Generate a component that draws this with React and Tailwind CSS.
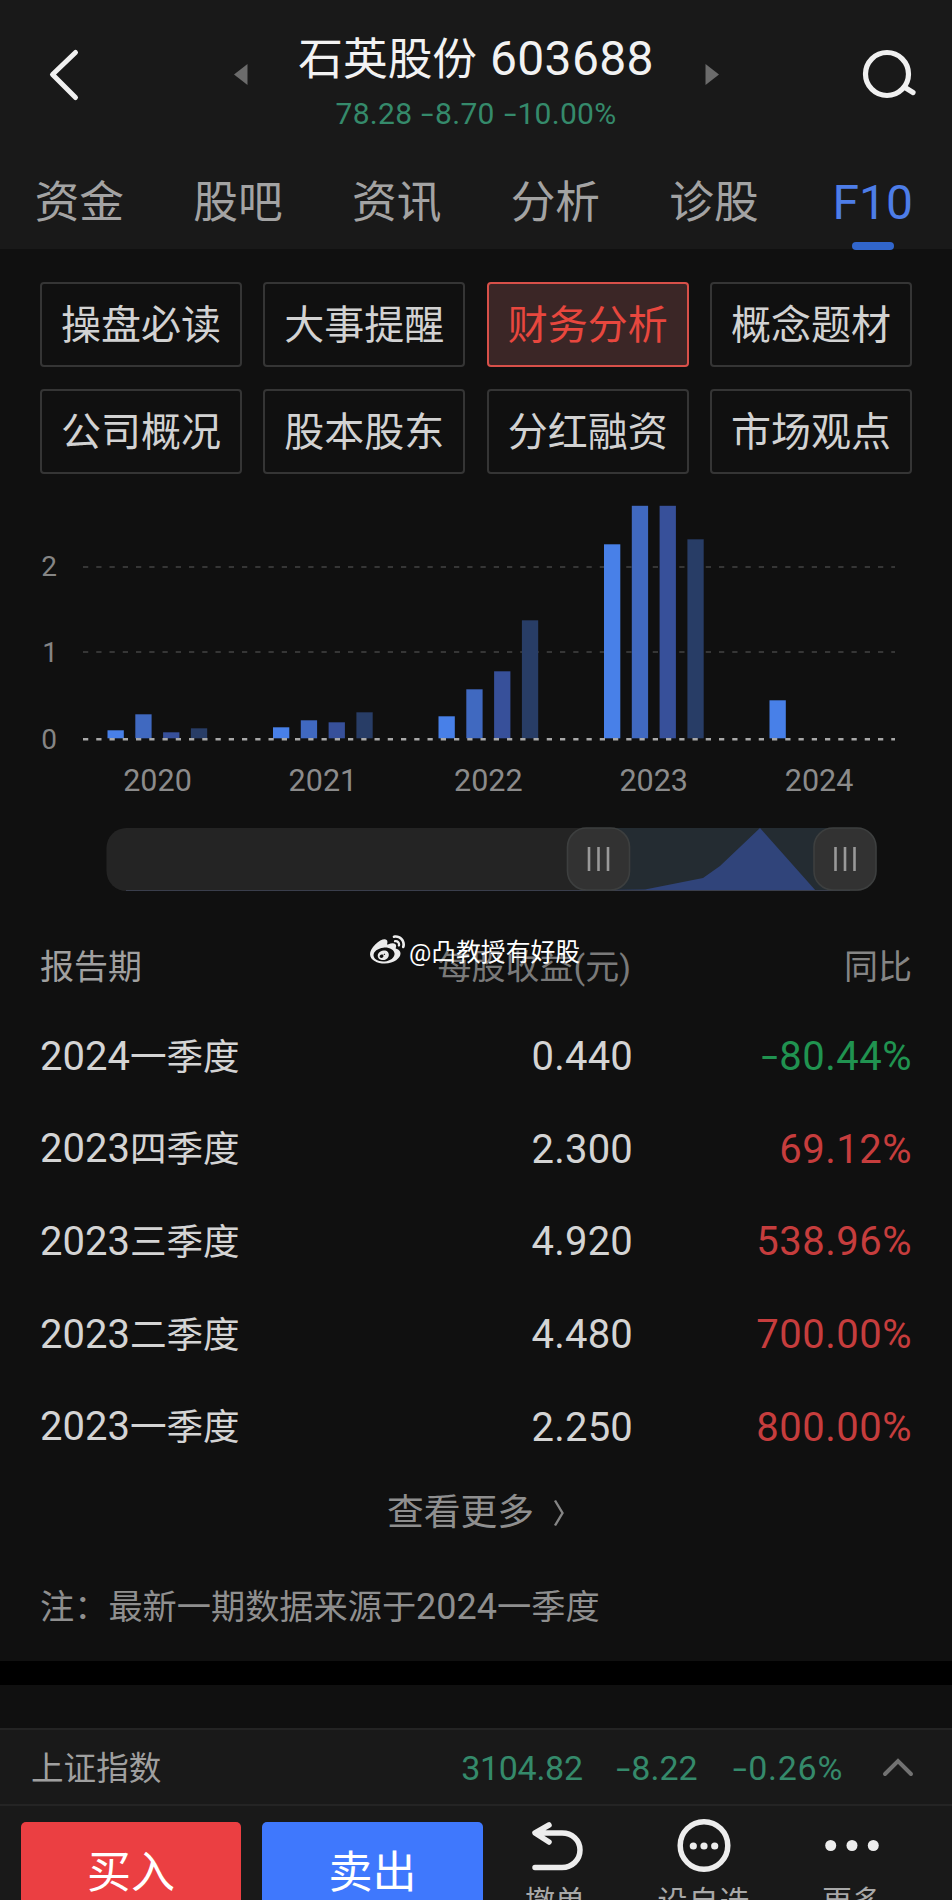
import { FaWeibo } from 'react-icons/fa';

const TABS = ['资金', '股吧', '资讯', '分析', '诊股', 'F10'];

const SECTIONS = ['操盘必读', '大事提醒', '财务分析', '概念题材', '公司概况', '股本股东', '分红融资', '市场观点'];

const BAR_COLORS = ['#4880e8', '#4069c0', '#37509a', '#283d66'];

// heights in px, one value per quarter
const YEARS = [
  { year: '2020', bars: [8, 24, 6, 10] },
  { year: '2021', bars: [11, 18, 16, 26] },
  { year: '2022', bars: [22, 49, 67, 118] },
  { year: '2023', bars: [194, 232.5, 232.5, 199] },
  { year: '2024', bars: [38] },
];

const ROWS = [
  { year: '2024', quarter: '一季度', eps: '0.440', change: '-80.44%' },
  { year: '2023', quarter: '四季度', eps: '2.300', change: '69.12%' },
  { year: '2023', quarter: '三季度', eps: '4.920', change: '538.96%' },
  { year: '2023', quarter: '二季度', eps: '4.480', change: '700.00%' },
  { year: '2023', quarter: '一季度', eps: '2.250', change: '800.00%' },
];

// quote with a widened minus sign
const Num = ({ children }) =>
  children.startsWith('-') ? (
    <span>
      <span className="inline-block w-[0.49em] origin-center scale-x-150 text-center">-</span>
      {children.slice(1)}
    </span>
  ) : (
    <span>{children}</span>
  );

const Header = () => (
  <header className="flex h-[150px] items-start justify-between pl-12 pr-[35px]">
    <button type="button" aria-label="返回" className="mt-12">
      <svg width="32" height="54" viewBox="0 0 32 54" fill="none" stroke="#f0f0f0" strokeWidth="5" strokeLinecap="round" strokeLinejoin="round">
        <path d="M27.5 4.5 4.5 26.5l23 23" />
      </svg>
    </button>
    <div className="flex items-start pl-[10px]">
      <svg className="mt-[63px]" width="14" height="23" viewBox="0 0 14 23" fill="#6b6b6b">
        <path d="M13.5 1v21L0 11.5z" />
      </svg>
      <div className="flex w-[457px] flex-col items-center">
        <h1 className="mt-[35px] flex h-12 items-baseline whitespace-nowrap text-[44.7px] leading-[48px] text-[#f2f2f2]">
          石英股份<span className="ml-[13px] text-[48px] tracking-[0.3px]">603688</span>
        </h1>
        <p className="mt-[15px] flex gap-2 text-[30px] leading-[32px] tracking-[0.3px] text-[#358a6b]">
          <Num>78.28</Num>
          <Num>-8.70</Num>
          <Num>-10.00%</Num>
        </p>
      </div>
      <svg className="mt-[63px]" width="14" height="23" viewBox="0 0 14 23" fill="#6b6b6b">
        <path d="M.5 1v21L14 11.5z" />
      </svg>
    </div>
    <button type="button" aria-label="搜索" className="mt-[49px]">
      <svg width="55" height="52" viewBox="0 0 55 52" fill="none" stroke="#f0f0f0" strokeWidth="5.2" strokeLinecap="round">
        <circle cx="25" cy="25" r="21.5" />
        <path d="m43 38.5 8 5" />
      </svg>
    </button>
  </header>
);

const Tabs = () => (
  <nav className="grid h-[99px] grid-cols-6">
    {TABS.map((tab) =>
      tab === 'F10' ? (
        <div key={tab} className="flex flex-col items-center text-[#4d7de8]">
          <span className="mt-[29px] h-12 text-[48px] leading-[48px]">{tab}</span>
          <span className="mt-[15px] h-2 w-[42px] shrink-0 rounded-full bg-[#3166cc]" />
        </div>
      ) : (
        <div key={tab} className="pt-[29px] text-center text-[44.7px] leading-[48px] text-[#a3a3a3]">
          {tab}
        </div>
      )
    )}
  </nav>
);

const SectionGrid = () => (
  <div className="grid grid-cols-4 gap-x-[21.3px] gap-y-[22px] px-10 pt-[33px]">
    {SECTIONS.map((name) => (
      <button
        key={name}
        type="button"
        className={`h-[85px] rounded-[4px] border-2 pt-0.5 text-[40px] leading-[40px] whitespace-nowrap ${
          name === '财务分析' ? 'border-[#d85049] bg-[#3b2626] text-[#e8473e]' : 'border-[#353535] text-[#d2d2d2]'
        }`}
      >
        {name}
      </button>
    ))}
  </div>
);

const EpsChart = () => (
  <svg className="block" width="952" height="336" viewBox="0 474 952 336">
    {[567, 652].map((y) => (
      <line key={y} x1="83" x2="895" y1={y} y2={y} stroke="#363636" strokeWidth="2" strokeDasharray="5.25 8" />
    ))}
    {YEARS.map(({ year, bars }, g) =>
      bars.map((h, i) => (
        <rect key={year + i} x={107.5 + g * 165.5 + i * 27.8} y={738.3 - h} width="16.3" height={h} fill={BAR_COLORS[i]} />
      ))
    )}
    <line x1="83" x2="895" y1="739.2" y2="739.2" stroke="#a8a8a8" strokeWidth="2.4" strokeDasharray="5.25 8" />
    <g fill="#858585" fontSize="28" textAnchor="end">
      <text x="57" y="575.5">2</text>
      <text x="58" y="661.5">1</text>
      <text x="57" y="748.5">0</text>
    </g>
    <g fill="#8b8b8b" fontSize="30.5" textAnchor="middle">
      {YEARS.map(({ year }, g) => (
        <text key={year} x={157.5 + g * 165.4} y="790.5">{year}</text>
      ))}
    </g>
  </svg>
);

const Handle = ({ x }) => (
  <g>
    <rect x={x} y="1" width="62" height="62" rx="19" fill="#323232" stroke="#3d3f3f" strokeWidth="1.6" />
    {[21.5, 31, 40.5].map((dx) => (
      <line key={dx} x1={x + dx} x2={x + dx} y1="20" y2="44" stroke="#999" strokeWidth="2.6" />
    ))}
  </g>
);

const RangeSlider = () => (
  <svg className="mt-[17px] block" width="952" height="65" viewBox="0 0 952 65">
    <rect x="106.5" y="1" width="769" height="63" rx="20" fill="#242424" />
    <rect x="598" y="1" width="247" height="63" fill="#242c32" />
    <path d="M520 64 645 62.5 703 51 720 39 760 1l56 63z" fill="#30447a" />
    <path d="M126 63.5H850" stroke="#3a3e4c" strokeWidth="1" />
    <Handle x={567.5} />
    <Handle x={814} />
  </svg>
);

const ReportTable = () => (
  <div className="pl-10 pr-10">
    <div className="relative mt-[46px] flex h-14 items-center pt-px text-[34px] leading-[40px]">
      <span className="flex-1 text-[#a0a0a0]">报告期</span>
      <span className="text-[#7a7a7a]">每股收益(元)</span>
      <span className="w-[281px] text-right text-[#858585]">同比</span>
      <div className="absolute -top-px left-[330px] flex items-center whitespace-nowrap text-white">
        <FaWeibo size={35} color="#ececec" className="-mt-1" />
        <span className="ml-[4px] text-[24.8px] leading-[28px]">@凸教授有好股</span>
      </div>
    </div>
    <div className="pt-[17px]">
      {ROWS.map((row) => (
        <div key={row.year + row.quarter} className="flex h-[92.6px] items-center text-[40px] leading-[48px] text-[#d4d4d4]">
          <span className="flex flex-1 items-baseline">
            {row.year}
            <span className="text-[36.6px]">{row.quarter}</span>
          </span>
          <span className="tracking-[0.2px]">{row.eps}</span>
          <span
            className={`w-[279px] text-right tracking-[0.5px] ${row.change.startsWith('-') ? 'text-[#209350]' : 'text-[#c63d3d]'}`}
          >
            <Num>{row.change}</Num>
          </span>
        </div>
      ))}
    </div>
  </div>
);

const IndexBar = () => (
  <div className="flex h-[78px] items-center border-y-2 border-[#242424] pt-0.5 pl-[31px] pr-[38px] text-[34px] leading-[40px] text-[#358a6b]">
    <span className="flex-1 pt-0.5 text-[32.6px] text-[#a0a0a0]">上证指数</span>
    <span className="tracking-[-0.3px]">
      <Num>3104.82</Num>
    </span>
    <span className="ml-8">
      <Num>-8.22</Num>
    </span>
    <span className="ml-[34px] tracking-[0.7px]">
      <Num>-0.26%</Num>
    </span>
    <svg className="ml-[39px]" width="32" height="20" viewBox="0 0 32 20" fill="none" stroke="#727272" strokeWidth="4" strokeLinecap="round">
      <path d="m3 16 13-13 13 13" />
    </svg>
  </div>
);

const Action = ({ label, className, children }) => (
  <div className={`flex shrink-0 flex-col items-center text-[30px] leading-[36px] text-[#a8a8a8] ${className}`}>
    <svg width="60" height="60" viewBox="0 0 60 60" fill="none" stroke="#ededed" strokeWidth="5.5" strokeLinecap="round" strokeLinejoin="round">
      {children}
    </svg>
    <span className="mt-2 whitespace-nowrap">{label}</span>
  </div>
);

const ActionBar = () => (
  <div className="flex h-[94px] items-start overflow-hidden pl-[21px] text-[44px] leading-[48px] text-white">
    <button type="button" className="mt-4 h-[100px] w-[220px] shrink-0 rounded-[5px] bg-[#eb3f42] pt-0.5">买入</button>
    <button type="button" className="mt-4 ml-[21px] h-[100px] w-[221px] shrink-0 rounded-[5px] bg-[#3f78fd] pt-0.5">卖出</button>
    <Action label="撤单" className="mt-[10px] ml-[13px] w-[118px]">
      <path d="M10 51.5h27c10 0 18-7.5 18-17.5s-8-17-18-17H11.500M24 9l-14 8 14 9" />
    </Action>
    <Action label="设自选" className="mt-[10px] ml-[30px] w-[120px] tracking-[1px]">
      <circle cx="30" cy="29.5" r="23.8" />
      <g fill="#ededed" stroke="none">
        <circle cx="19.3" cy="30" r="3.6" />
        <circle cx="30" cy="30" r="3.6" />
        <circle cx="40.7" cy="30" r="3.6" />
      </g>
    </Action>
    <Action label="更多" className="mt-[10px] ml-7 w-[120px]">
      <g fill="#ededed" stroke="none">
        <circle cx="8.7" cy="29.5" r="5.5" />
        <circle cx="30" cy="29.5" r="5.5" />
        <circle cx="51.3" cy="29.5" r="5.5" />
      </g>
    </Action>
  </div>
);

const App = () => (
  <div className="flex h-[1900px] w-[952px] flex-col overflow-hidden bg-[#101010] font-['Roboto','Noto_Sans_CJK_SC',sans-serif]">
    <div className="shrink-0 bg-[#191919]">
      <Header />
      <Tabs />
    </div>
    <main className="h-[1412px] shrink-0">
      <SectionGrid />
      <EpsChart />
      <RangeSlider />
      <ReportTable />
      <div className="mt-[15px] flex h-12 items-center justify-center pl-px text-[36.8px] leading-[48px] text-[#8f8f8f]">
        查看更多
        <svg className="ml-[19px]" width="13" height="28" viewBox="0 0 13 28" fill="none" stroke="#858585" strokeWidth="2.4">
          <path d="m2 1.5 7.5 12.5L2 26.5" />
        </svg>
      </div>
      <p className="mt-[46px] pl-10 text-[34.2px] leading-[48px] text-[#8f8f8f]">
        注：最新一期数据来源于<span className="text-[36px]">2024</span>一季度
      </p>
    </main>
    <div className="h-6 shrink-0 bg-black" />
    <footer className="mt-[43px] shrink-0 bg-[#191919]">
      <IndexBar />
      <ActionBar />
    </footer>
  </div>
);

export default App;
